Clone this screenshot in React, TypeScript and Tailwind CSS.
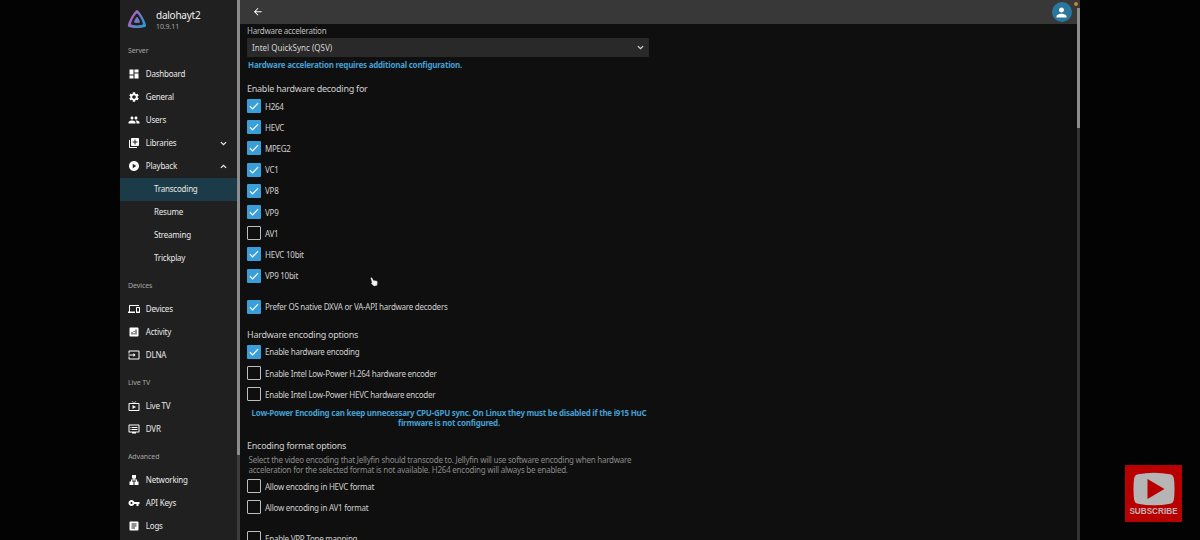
import type { ReactNode } from "react";
import type { IconType } from "react-icons";
import {
  MdAnalytics,
  MdArrowBack,
  MdArticle,
  MdDashboard,
  MdDevices,
  MdDvr,
  MdInput,
  MdLan,
  MdLibraryAdd,
  MdLiveTv,
  MdPeople,
  MdPerson,
  MdPlayCircle,
  MdSettings,
  MdVpnKey,
} from "react-icons/md";

type NavItem = {
  label: string;
  icon: IconType;
  open?: boolean;
  children?: string[];
};

type Option = {
  label: string;
  checked?: boolean;
};

const server: NavItem[] = [
  { label: "Dashboard", icon: MdDashboard },
  { label: "General", icon: MdSettings },
  { label: "Users", icon: MdPeople },
  { label: "Libraries", icon: MdLibraryAdd, open: false },
  {
    label: "Playback",
    icon: MdPlayCircle,
    open: true,
    children: ["Transcoding", "Resume", "Streaming", "Trickplay"],
  },
];

const devices: NavItem[] = [
  { label: "Devices", icon: MdDevices },
  { label: "Activity", icon: MdAnalytics },
  { label: "DLNA", icon: MdInput },
];

const liveTv: NavItem[] = [
  { label: "Live TV", icon: MdLiveTv },
  { label: "DVR", icon: MdDvr },
];

const advanced: NavItem[] = [
  { label: "Networking", icon: MdLan },
  { label: "API Keys", icon: MdVpnKey },
  { label: "Logs", icon: MdArticle },
];

const codecs: Option[] = [
  { label: "H264", checked: true },
  { label: "HEVC", checked: true },
  { label: "MPEG2", checked: true },
  { label: "VC1", checked: true },
  { label: "VP8", checked: true },
  { label: "VP9", checked: true },
  { label: "AV1" },
  { label: "HEVC 10bit", checked: true },
  { label: "VP9 10bit", checked: true },
];

const encoding: Option[] = [
  { label: "Enable hardware encoding", checked: true },
  { label: "Enable Intel Low-Power H.264 hardware encoder" },
  { label: "Enable Intel Low-Power HEVC hardware encoder" },
];

const formats: Option[] = [
  { label: "Allow encoding in HEVC format" },
  { label: "Allow encoding in AV1 format" },
];

function Logo() {
  return (
    <svg className="h-5 w-5 shrink-0" viewBox="0 0 512 512">
      <defs>
        <linearGradient id="logo" x1="110" y1="213" x2="496" y2="436" gradientUnits="userSpaceOnUse">
          <stop offset="0" stopColor="#a564c0" />
          <stop offset="1" stopColor="#1a9fd6" />
        </linearGradient>
      </defs>
      <path
        fill="url(#logo)"
        d="M256 201.600c-20.400 0-86.200 119.300-76.200 139.400s142.500 19.900 152.400 0-55.700-139.400-76.200-139.400z"
      />
      <path
        fill="url(#logo)"
        fillRule="evenodd"
        d="M256 23.300C194.400 23.300-3.800 382.700 26.400 443.400s429.300 60 459.200 0S317.700 23.300 256 23.300zm150.500 367.500c-19.600 39.300-281.200 39.800-301 0S215.700 115.500 256 115.500s170.100 235.900 150.500 275.300z"
      />
    </svg>
  );
}

function Chevron({ up }: { up?: boolean }) {
  return (
    <svg
      className="h-[11px] w-[11px] shrink-0"
      viewBox="0 0 11 11"
      fill="none"
      stroke="currentColor"
      strokeWidth="1.300"
    >
      <path d={up ? "M2.900 6.900 5.500 4.300 8.100 6.900" : "M2.900 4.100 5.500 6.700 8.100 4.100"} />
    </svg>
  );
}

function Section({ title, items }: { title: string; items: NavItem[] }) {
  return (
    <section>
      <h2 className="flex h-[23px] items-center pl-2 text-[7px] tracking-[-0.1px] text-[#a5a5a5]">{title}</h2>
      <ul>
        {items.map(({ label, icon: Icon, open, children }) => (
          <li key={label}>
            <div className="flex h-[23px] items-center pl-[7.500px] pr-2 text-[8px] tracking-[-0.220px] text-[#e8e8e8]">
              <Icon className="mr-[6.300px] h-3 w-3 shrink-0 text-white" />
              <span className="flex-1">{label}</span>
              {open !== undefined && <Chevron up={open} />}
            </div>
            {children?.map((child, i) => (
              <div
                key={child}
                className={
                  i === 0
                    ? "flex h-[23px] items-center bg-[#1c3b49] pl-[34px] text-[8px] tracking-[-0.220px] text-[#e8e8e8]"
                    : "flex h-[23px] items-center pl-[34px] text-[8px] tracking-[-0.220px] text-[#e8e8e8]"
                }
              >
                {child}
              </div>
            ))}
          </li>
        ))}
      </ul>
    </section>
  );
}

function Check({ label, checked }: Option) {
  return (
    <label className="flex h-[21.200px] shrink-0 items-center gap-1 text-[8px] tracking-[-0.250px] text-[#cfcfcf]">
      {checked ? (
        <span className="flex h-[14px] w-[14px] items-center justify-center rounded-[1px] bg-[#3a9fd8]">
          <svg className="h-[10px] w-[10px]" viewBox="0 0 10 10" fill="none" stroke="#fff" strokeWidth="1.200">
            <path d="M0.900 5.200 3.500 7.800 9.100 2.200" />
          </svg>
        </span>
      ) : (
        <span className="h-[14px] w-[14px] rounded-[1px] border border-[#bdbdbd]" />
      )}
      <span className="pt-px">{label}</span>
    </label>
  );
}

function Heading({ children }: { children: ReactNode }) {
  return (
    <h3 className="flex h-[14px] items-center text-[9px] tracking-[-0.250px] text-[#cfcfcf]">{children}</h3>
  );
}

export default function App() {
  return (
    <div className="relative flex h-[540px] w-[1200px] overflow-hidden bg-[#030303] pl-[120px] font-['Noto_Sans',sans-serif]">
      <aside className="flex w-[117px] shrink-0 flex-col bg-[#202020]">
        <div className="flex h-[38px] items-start gap-2 pl-[7px] pt-[9px]">
          <Logo />
          <div className="pl-px">
            <div className="text-[10px] leading-[12px] tracking-[-0.250px] text-[#f0f0f0]">dalohayt2</div>
            <div className="text-[7px] leading-[12px] tracking-[-0.100px] text-[#a5a5a5]">10.9.11</div>
          </div>
        </div>
        <nav className="flex flex-col gap-[5px] pt-[1.500px]">
          <Section title="Server" items={server} />
          <Section title="Devices" items={devices} />
          <Section title="Live TV" items={liveTv} />
          <Section title="Advanced" items={advanced} />
        </nav>
      </aside>
      <div className="w-[3px] shrink-0 bg-[#3b3b3b]">
        <div className="h-[455px] bg-[#8c8c8c]" />
      </div>

      <div className="flex w-[837px] shrink-0 flex-col bg-[#0f0f0f]">
        <header className="flex h-6 shrink-0 items-center justify-between bg-[#383838] pl-3 pr-[5.500px]">
          <MdArrowBack className="h-[11.500px] w-[11.500px] text-white" />
          <span className="flex h-5 w-5 items-center justify-center rounded-full bg-[#2b769d]">
            <MdPerson className="h-[15px] w-[15px] text-white" />
          </span>
        </header>

        <main className="flex min-h-0 w-[409px] flex-1 flex-col overflow-hidden pl-[7px]">
          <div className="flex h-[14px] shrink-0 items-center text-[8px] tracking-[-0.250px] text-[#bdbdbd]">
            Hardware acceleration
          </div>
          <div className="flex h-[19px] shrink-0 items-center justify-between rounded-[1px] bg-[#292929] pl-[5px] pr-[3px] text-[8px] text-[#d5d5d5]">
            Intel QuickSync (QSV)
            <Chevron />
          </div>
          <p className="mt-[3px] h-[10px] shrink-0 whitespace-nowrap pl-px text-[8px] font-bold leading-[10px] tracking-[-0.230px] text-[#459fd2]">
            Hardware acceleration requires additional configuration.
          </p>

          <div className="mt-[11.500px] shrink-0">
            <Heading>Enable hardware decoding for</Heading>
          </div>
          {codecs.map((c) => (
            <Check key={c.label} {...c} />
          ))}
          <div className="mt-[10px] shrink-0">
            <Check label="Prefer OS native DXVA or VA-API hardware decoders" checked />
          </div>

          <div className="mt-[10px] shrink-0">
            <Heading>Hardware encoding options</Heading>
          </div>
          {encoding.map((c) => (
            <Check key={c.label} {...c} />
          ))}
          <p className="mt-[3px] shrink-0 whitespace-nowrap pl-[2px] text-center text-[8px] font-bold leading-[10px] tracking-[-0.250px] text-[#459fd2]">
            Low-Power Encoding can keep unnecessary CPU-GPU sync. On Linux they must be disabled if the i915 HuC
            <br />
            firmware is not configured.
          </p>

          <div className="mt-[11px] shrink-0">
            <Heading>Encoding format options</Heading>
          </div>
          <p className="mb-[0.500px] mt-[2px] shrink-0 whitespace-nowrap pl-[1.500px] text-[8px] leading-[10px] tracking-[-0.235px] text-[#8a8a8a]">
            Select the video encoding that Jellyfin should transcode to. Jellyfin will use software encoding when hardware
            <br />
            acceleration for the selected format is not available. H264 encoding will always be enabled.
          </p>
          {formats.map((c) => (
            <Check key={c.label} {...c} />
          ))}
          <div className="mt-[10px] shrink-0">
            <Check label="Enable VPP Tone mapping" />
          </div>
        </main>
      </div>
      <div className="w-[3px] shrink-0 bg-[#333333]">
        <div className="h-2 bg-[#383838]" />
        <div className="h-[120px] bg-[#8c8c8c]" />
      </div>

      {/* screen recording dot */}
      <span className="absolute left-[1074px] top-[2px] h-1 w-1 rounded-full bg-[#b98a3a]" />

      {/* pointer */}
      <svg className="absolute left-[370px] top-[277px] h-[10px] w-[8px]" viewBox="0 0 8 10">
        <path
          d="M1 .6c.7-.4 1.200 0 1.500.7L3.300 3.200l3 .6c.9.2 1.300.8 1.200 1.700L7.200 8.500 4 9.300 1.300 6.800c-.6-.6-.1-1.400.7-1.100L.7 1.700C.5 1.200.6.8 1 .6z"
          fill="#f2f2f2"
          stroke="#222"
          strokeWidth=".3"
        />
      </svg>

      {/* subscribe watermark */}
      <div className="absolute left-[1125px] top-[465px] flex h-[57px] w-[57px] flex-col items-center bg-[#b80000] pt-[7px]">
        <svg className="h-[34px] w-[42px] shrink-0" viewBox="0 0 42 34">
          <path
            d="M5 2.200Q21-.8 37 2.200 40.500 3 41 7q1 10 0 20-.5 4-4 4.800-16 3-32 0Q1.500 31 1 27 0 17 1 7 1.500 3 5 2.200z"
            fill="#b5b5b5"
          />
          <path d="M14.500 7v20L31.500 17z" fill="#b80000" />
        </svg>
        <span className="font-['Liberation_Sans',sans-serif] text-[8.200px] font-bold leading-[11px] text-[#c4b4b4]">
          SUBSCRIBE
        </span>
      </div>
    </div>
  );
}
